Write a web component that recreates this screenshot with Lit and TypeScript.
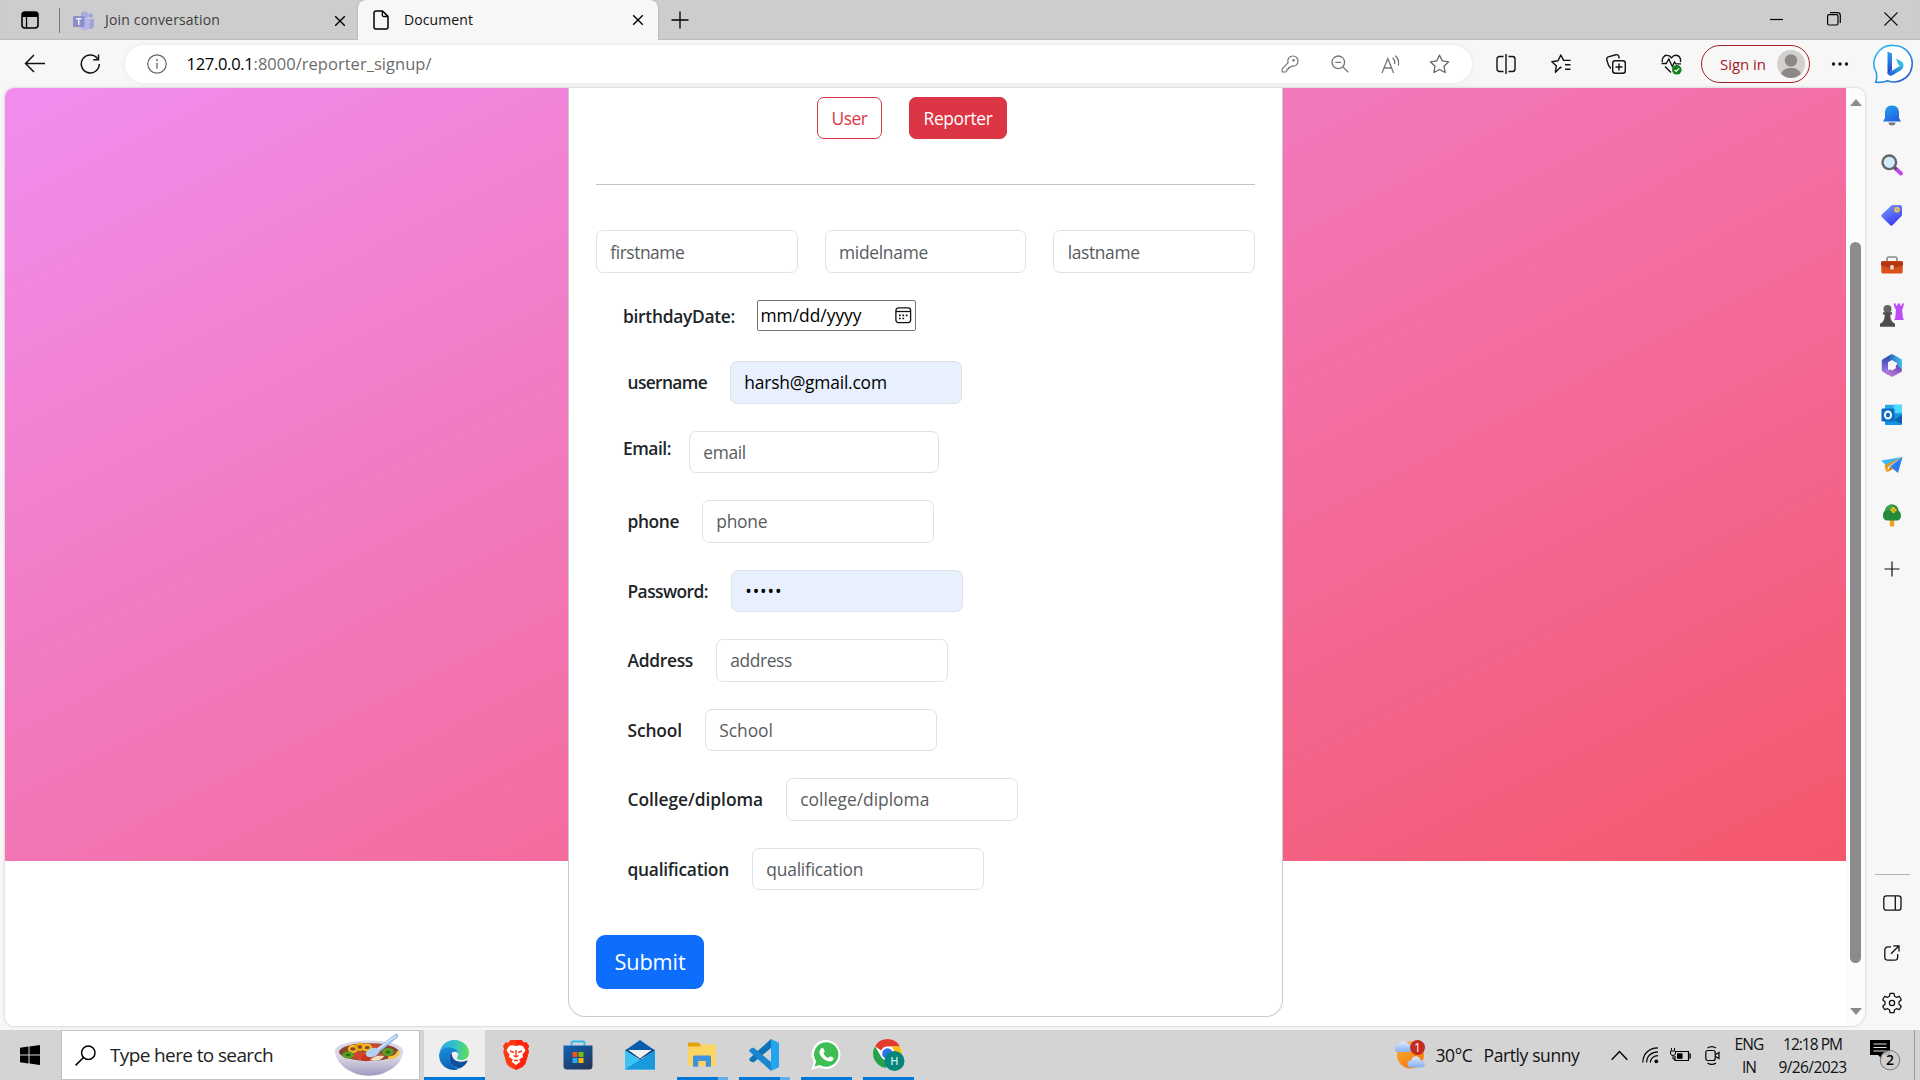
import { LitElement, html, css, svg, TemplateResult } from "lit";
import { customElement, property, query } from "lit/decorators.js";

/** A one-line label whose tracking is adjusted so that it spans a given width. */
@customElement("fit-label")
class FitLabel extends LitElement {
  @property() text = "";
  @property({ type: Number }) width = 0;
  @query(".t") private span!: HTMLSpanElement;

  static styles = css`
    :host { display: inline-block; white-space: pre; }
  `;

  updated() {
    if (!this.width) return;
    this.span.style.letterSpacing = "0px";
    const natural = this.span.getBoundingClientRect().width;
    this.span.style.letterSpacing = `${(this.width - natural) / this.text.length}px`;
  }

  render() {
    return html`<span class="t">${this.text}</span>`;
  }
}

const label = (text: string, width: number) => html`<fit-label .text=${text} .width=${width}></fit-label>`;

const icon = (w: number, h: number, body: TemplateResult | unknown) =>
  html`<svg class="ic" width=${w} height=${h} viewBox="0 0 ${w} ${h}" fill="none">${body}</svg>`;

/* ---------- browser chrome icons ---------- */
const tabActions = icon(18, 18, svg`<rect x="1" y="1" width="16" height="16" rx="3" stroke="#000" stroke-width="1.6"/><path d="M1 5V3.5A2.5 2.5 0 0 1 3.5 1h11A2.500 2.500 0 0 1 17 3.500V6H1z" fill="#000"/><path d="M5.500 5v12" stroke="#000" stroke-width="1.300"/>`);
const teams = icon(21, 20, svg`<circle cx="11.500" cy="4" r="3.600" fill="#a9aade"/><circle cx="17.500" cy="4.500" r="2.300" fill="#a2a4d8"/><path d="M14 8h7v6.500a3.500 3.500 0 0 1-5 3z" fill="#a2a4d8"/><path d="M6 8h11v6a5.500 5.500 0 0 1-11 0z" fill="#b4b5e6"/><rect x="0" y="5" width="11.500" height="11" rx="1.200" fill="#8c8fcb"/><path d="M3 7.800h5.500M5.750 8v6" stroke="#eeeefa" stroke-width="1.500"/>`);
const close = icon(12, 12, svg`<path d="M1.200 1.200l9.600 9.600M10.800 1.200l-9.600 9.600" stroke="#000" stroke-width="1.400"/>`);
const page = icon(16, 20, svg`<path d="M3 .9h6.500L15 6.400V17a2 2 0 0 1-2 2H3a2 2 0 0 1-2-2V3A2 2 0 0 1 3 .9z" stroke="#000" stroke-width="1.500"/><path d="M9.300 1v4a1.500 1.500 0 0 0 1.500 1.500H15" stroke="#000" stroke-width="1.300"/>`);
const plus = icon(18, 18, svg`<path d="M9 .5v17M.5 9h17" stroke="#000" stroke-width="1.300"/>`);
const minimise = icon(14, 14, svg`<path d="M0 7.500h13" stroke="#000" stroke-width="1.200"/>`);
const restore = icon(14, 14, svg`<rect x=".6" y="2.600" width="10.400" height="10.400" rx="1.500" stroke="#000" stroke-width="1.200"/><path d="M3 .7h7.500A2.800 2.800 0 0 1 13.300 3.500V11" stroke="#000" stroke-width="1.200"/>`);
const bigClose = icon(14, 14, svg`<path d="M.5.5l13 13M13.500.5l-13 13" stroke="#111" stroke-width="1.100"/>`);
const back = icon(22, 20, svg`<path d="M21 9.500H1.500M10 1L1.500 9.500 10 18" stroke="#111" stroke-width="1.500"/>`);
const reload = icon(21, 20, svg`<path d="M17.600 4.700A9 9 0 1 0 19.300 10" stroke="#111" stroke-width="1.500"/><path d="M18.500.5v5.200h-5.300" stroke="#111" stroke-width="1.500"/>`);
const info = icon(20, 20, svg`<circle cx="10" cy="10" r="9.200" stroke="#666" stroke-width="1.200"/><path d="M10 8.700v6" stroke="#666" stroke-width="1.300"/><circle cx="10" cy="6" r=".95" fill="#666"/>`);
const key = icon(18, 18, svg`<path d="M7 7.800C6 4 8.500 1 12 1a5 5 0 0 1 5 5c0 3.500-3 5.800-6.300 5L9.500 12.300H7.700V14H6v1.700L4.700 17H1.200v-3.200z" stroke="#777" stroke-width="1.200" stroke-linejoin="round"/><circle cx="12.600" cy="5.300" r="1.300" fill="#777"/>`);
const zoomOut = icon(18, 18, svg`<circle cx="7.300" cy="7.300" r="6.300" stroke="#777" stroke-width="1.300"/><path d="M12 12l5.200 5.200M4.300 7.300h6" stroke="#777" stroke-width="1.300"/>`);
const readAloud = icon(20, 19, svg`<path d="M1 18L6.800 3.500 12.600 18M3 13h7.600" stroke="#777" stroke-width="1.300"/><path d="M12 3.200c1.700 1.500 1.900 3.500 1.600 5.500M14.500 1c3.200 2.800 3.500 6 2.900 9.200" stroke="#777" stroke-width="1.300" stroke-linecap="round"/>`);
const star = icon(21, 20, svg`<path d="M10.500 1.200l2.800 5.700 6.300.9-4.600 4.400 1.100 6.300-5.600-3-5.600 3L6 12.200 1.400 7.800l6.300-.9z" stroke="#666" stroke-width="1.300" stroke-linejoin="round"/>`);
const split = icon(20, 20, svg`<path d="M7.500 2.500H3.500A2.500 2.500 0 0 0 1 5v10a2.500 2.500 0 0 0 2.500 2.500h4M12.500 2.500h4A2.500 2.500 0 0 1 19 5v10a2.500 2.500 0 0 1-2.500 2.500h-4M10 0v20" stroke="#111" stroke-width="1.400"/>`);
const favorites = icon(20, 20, svg`<path d="M10.500 13.800l-1-.6-5.100 5 .9-6.400L.8 7.700l6.200-.9L9.800 1l2.800 5.400h7M14 10.700h5.500M14 15.300h5.500" stroke="#111" stroke-width="1.400" stroke-linejoin="round"/>`);
const collections = icon(20, 20, svg`<rect x="6.700" y="6.700" width="12.600" height="12.600" rx="2.500" stroke="#111" stroke-width="1.400"/><path d="M13 9.500v7M9.500 13h7" stroke="#111" stroke-width="1.400"/><path d="M4.800 14.500L2.500 11.200.8 6A2.500 2.500 0 0 1 2.400 2.800l7.400-2a2.300 2.300 0 0 1 3 1.700l.5 2" stroke="#111" stroke-width="1.400"/>`);
const heart = icon(21, 21, svg`<path d="M1.300 8C.5 4.500 3 1.200 6 1.300c2 0 3.300 1 4.400 2.500C11.500 2.300 13 1.300 15 1.300c3 0 5.300 3 4.500 6.700M4 12.500l6 6" stroke="#111" stroke-width="1.400"/><path d="M.5 9.500h4.800L7.800 5l3.500 7.500L13.500 8l1.200 1.800H20" stroke="#111" stroke-width="1.300"/><circle cx="15.800" cy="15.800" r="4.800" fill="#12801a"/><path d="M13.500 15.800l1.700 1.700 3-3.200" stroke="#fff" stroke-width="1.200"/>`);
const avatar = icon(28, 28, svg`<circle cx="14" cy="14" r="14" fill="#d3d1cf"/><circle cx="14" cy="10.500" r="6.200" fill="#8d8885"/><path d="M4 23.800c1.500-4 5-5.800 10-5.800s8.500 1.800 10 5.800A14 14 0 0 1 4 23.800z" fill="#8d8885"/>`);
const dots = icon(18, 6, svg`<circle cx="2.500" cy="3" r="1.700" fill="#111"/><circle cx="9" cy="3" r="1.700" fill="#111"/><circle cx="15.500" cy="3" r="1.700" fill="#111"/>`);
const bing = icon(40, 40, svg`<defs><linearGradient id="bo" x1="0" y1="0" x2="1" y2="1"><stop offset="0" stop-color="#2cc3f5"/><stop offset=".5" stop-color="#2196ea"/><stop offset="1" stop-color="#2348cf"/></linearGradient><linearGradient id="bb" x1="0" y1="0" x2="0" y2="1"><stop offset="0" stop-color="#2fa4f5"/><stop offset="1" stop-color="#1f3fc4"/></linearGradient><linearGradient id="bc" x1="0" y1="1" x2="1" y2="0"><stop offset="0" stop-color="#1d55d8"/><stop offset="1" stop-color="#35d5e8"/></linearGradient></defs><path d="M20 1.500a18.200 18.200 0 1 1-6.500 35.200C9.500 38.500 6 38.600 1.800 38.200c1.400-3 1-6 .6-9.500A18.200 18.200 0 0 1 20 1.500z" fill="#fff" stroke="url(#bo)" stroke-width="1.600"/><path d="M13.500 7.500l4.500 1.900v17.200L13.500 30z" fill="url(#bb)"/><path d="M13.500 28.500c0 3 3 4 5.500 2.500l8.500-5.200c2.800-2.400 2.800-6.800-.5-8.600L22 14.500l2.300 6 2 1.200L16 28z" fill="url(#bc)"/>`);

/* ---------- sidebar icons ---------- */
const bell = icon(20, 21, svg`<defs><linearGradient id="be" x1="0" y1="0" x2=".6" y2="1"><stop offset="0" stop-color="#1fa5ea"/><stop offset="1" stop-color="#2463e6"/></linearGradient></defs><path d="M10 .5c5 0 7 3.500 7 7.500v5l2 3.500H1L3 13V8C3 4 5 .5 10 .5z" fill="url(#be)"/><path d="M6.500 17.500h7a3.500 3 0 0 1-7 0z" fill="#777"/>`);
const search = icon(22, 22, svg`<path d="M14 14l6 5.500" stroke="#c043f0" stroke-width="4" stroke-linecap="round"/><path d="M13 13l2.500 2.500" stroke="#555" stroke-width="3"/><circle cx="8.300" cy="8.300" r="6.800" fill="#d0ecfc" stroke="#666" stroke-width="2.400"/>`);
const tag = icon(22, 22, svg`<defs><linearGradient id="tg" x1="0" y1="0" x2="0.500" y2="1"><stop offset="0" stop-color="#7aa2ff"/><stop offset="1" stop-color="#3a3ff0"/></linearGradient></defs><path d="M12 1h7a2 2 0 0 1 2 2v7.500c0 .7-.2 1.200-.7 1.700L11.700 21a1.800 1.800 0 0 1-2.600 0L.9 13a1.800 1.800 0 0 1 0-2.600L10 1.700C10.600 1.200 11.200 1 12 1z" fill="url(#tg)"/><circle cx="16" cy="5.800" r="2" fill="#9a9bff" stroke="#f5cb2e" stroke-width="1.600"/>`);
const toolbox = icon(24, 18, svg`<path d="M7 6V3a2 2 0 0 1 2-2h6a2 2 0 0 1 2 2v3" stroke="#8b8b8b" stroke-width="1.700"/><rect x="1.300" y="5" width="21.400" height="12.500" rx="1.500" fill="#dc4f1b"/><path d="M1 5.500h22v4L14 12h-4L1 9.500z" fill="#b3360f"/><rect x="10.200" y="9" width="3.600" height="4.500" rx="1.500" fill="#ddd"/>`);
const chess = icon(24, 24, svg`<path d="M13.500.5h2.300v2h1.700v-2h2.600v2h1.700v-2H24L22.700 6H22l.8 8 1 3h-9.500l1-3 .7-8h-.8z" fill="#be4cf5"/><circle cx="7.500" cy="6" r="4" fill="#646464"/><path d="M3 9.300h9v2.200h-1.700c0 4 .7 6 2.700 8l2 1.200v3H0v-3l2-1.200c2-2 2.700-4 2.700-8H3z" fill="#4c4c4c"/>`);
const m365 = icon(22, 23, svg`<defs><linearGradient id="ma" x1="0" y1="0" x2="0" y2="1"><stop offset="0" stop-color="#2a3fae"/><stop offset="1" stop-color="#a98ae8"/></linearGradient><linearGradient id="mb" x1="0" y1="0" x2="1" y2="0"><stop offset="0" stop-color="#2465b5"/><stop offset="1" stop-color="#48bff2"/></linearGradient><linearGradient id="mc" x1="0" y1="1" x2="1" y2="0"><stop offset="0" stop-color="#d08ae4"/><stop offset="1" stop-color="#5d3eb0"/></linearGradient></defs><path d="M9.500.8L1.800 5.200A2 2 0 0 0 .8 7v9c0 .8.400 1.500 1 1.800L7 21V8.200l5-3z" fill="url(#ma)"/><path d="M8.500 1.300L10 .4a2 2 0 0 1 2 0l8 4.700a2 2 0 0 1 1 1.800v9.200L16 13V9L9.500 5.200 7.500 8z" fill="url(#mb)"/><path d="M3 18.500l8-4.500 5-3.500 5 5.300-.5 2L12 22.500a2 2 0 0 1-2 0z" fill="url(#mc)"/><path d="M11 8l3.800 2v4.300L11 16.500l-3.800-2.200V10z" fill="#f7f7f7"/>`);
const outlook = icon(22, 22, svg`<rect x="4" y=".8" width="17" height="16" rx="1" fill="#28a8ea"/><path d="M12.500.8H21v8h-8.500z" fill="#50d9ff"/><path d="M4 11l17-1v10a1 1 0 0 1-1 1H5a1 1 0 0 1-1-1z" fill="#1490df"/><path d="M13 16l8-5v9z" fill="#0f5fb0"/><rect x=".5" y="4.500" width="13" height="13" rx="1.200" fill="#0a6cc5"/><ellipse cx="7" cy="11" rx="3.100" ry="3.500" stroke="#fff" stroke-width="2"/>`);
const plane = icon(24, 19, svg`<path d="M1 4.500L22.500 1 8 11z" fill="#3fb6f5"/><path d="M22.500 1L8 10.500 7.500 16l-1.500-.5-1.500-6.300z" fill="#e89a16"/><path d="M22.500 1L10 10.500l8 6.500z" fill="#2b7cf0"/><path d="M7.300 16l2.700-5.500 3 2.500z" fill="#d98300"/>`);
const tree = icon(20, 23, svg`<rect x="7.800" y="15" width="4.500" height="7.500" rx="1" fill="#f0a020"/><path d="M10 .5c4 0 6 2.500 6.500 6 2.500 2 3 5 2 7.500-1 2-2 2.500-4 2.500h-9c-2.500 0-4-1.500-4.500-4C.7 10 1.500 8 3 6.500 3.700 3 6 .5 10 .5z" fill="#228a3a"/><path d="M10 .5C6 .5 3.700 3 3.500 6.500L13 5z" fill="#3aa64c"/><path d="M11.500 3v6M8.500 6h6" stroke="#f6c51d" stroke-width="2.400"/><circle cx="11.500" cy="6" r="1" fill="#e07b00"/>`);
const sidePlus = icon(16, 16, svg`<path d="M8 .5v15M.5 8h15" stroke="#111" stroke-width="1.200"/>`);
const panel = icon(19, 16, svg`<rect x=".8" y=".8" width="17.200" height="14.400" rx="2.500" stroke="#111" stroke-width="1.300"/><path d="M12.300 1v14" stroke="#111" stroke-width="1.300"/>`);
const openExt = icon(16, 16, svg`<path d="M7 1.800H4A3.200 3.200 0 0 0 .8 5v7A3.200 3.200 0 0 0 4 15.200h6.500A3.200 3.200 0 0 0 13.700 12V9M9.300.8H15v5.700M15 .8L7 8.700" stroke="#111" stroke-width="1.300"/>`);
const gear = icon(22, 22, svg`<path d="M9 1.300h4l.6 3 1.800 1 2.900-1 2 3.500-2.300 2v2.400l2.300 2-2 3.500-2.900-1-1.800 1-.6 3H9l-.6-3-1.800-1-2.900 1-2-3.500 2.300-2V9.800l-2.300-2 2-3.500 2.900 1 1.800-1z" stroke="#111" stroke-width="1.300" stroke-linejoin="round"/><circle cx="11" cy="11" r="2.600" stroke="#111" stroke-width="1.300"/>`);

/* ---------- taskbar icons ---------- */
const windows = icon(20, 20, svg`<path d="M0 2.800l8.500-1.200v7.900H0zM9.500 1.400L20 0v9.500H9.500zM0 10.500h8.500v7.900L0 17.200zM9.500 10.500H20V20L9.500 18.600z" fill="#000"/>`);
const lens = icon(21, 21, svg`<circle cx="13.300" cy="7.700" r="6.700" stroke="#000" stroke-width="1.500"/><path d="M8.500 12.500L.6 20.400" stroke="#000" stroke-width="1.600"/>`);
const bowl = icon(70, 44, svg`<defs><linearGradient id="bw" x1="0" y1="0" x2="0" y2="1"><stop offset="0" stop-color="#f0eef6"/><stop offset="1" stop-color="#a09bbd"/></linearGradient></defs><path d="M.8 17C1 29 11 36 20 40c8 3.500 22 3.500 30 0 9-4 19-11 19-22z" fill="url(#bw)"/><ellipse cx="35" cy="18" rx="34.300" ry="10.500" fill="#d9d6e6"/><ellipse cx="35" cy="19" rx="30" ry="8.800" fill="#8a4432"/><ellipse cx="34" cy="23" rx="17" ry="4.500" fill="#a8563c"/><g stroke-width="2.400"><ellipse cx="19" cy="16" rx="4" ry="3" stroke="#f3b81c"/><ellipse cx="26" cy="14" rx="4" ry="3" stroke="#f0a80c"/><ellipse cx="33" cy="14.500" rx="4" ry="2.800" stroke="#f3b81c"/></g><ellipse cx="14" cy="22" rx="6" ry="3.500" fill="#5c9e28"/><ellipse cx="14" cy="22" rx="2.500" ry="1.300" fill="#2e6b12"/><ellipse cx="54" cy="19" rx="6" ry="4" fill="#5c9e28"/><ellipse cx="54" cy="19" rx="2.500" ry="1.600" fill="#2e6b12"/><path d="M64 18c1 5-6 7-10 7" stroke="#f3c23c" stroke-width="3"/><ellipse cx="25" cy="23" rx="5" ry="3.800" fill="#d8402a"/><ellipse cx="32" cy="25" rx="4.500" ry="3.300" fill="#c8331f"/><ellipse cx="42" cy="13" rx="4" ry="2.500" fill="#cf4a2c"/><path d="M36 27c3-4 9-5 14-4-2 4-8 6-14 4z" fill="#f4dcc0"/><path d="M62 3L43 18" stroke="#9bbde6" stroke-width="4.500" stroke-linecap="round"/><path d="M61.500 3L43 17" stroke="#cfe2f8" stroke-width="2" stroke-linecap="round"/><ellipse cx="38.500" cy="19.500" rx="7" ry="4.300" fill="#b4d0ee" transform="rotate(-20 38.500 19.500)"/>`);
const edge = icon(30, 30, svg`<defs><linearGradient id="e1" x1="0" y1=".3" x2="1" y2=".4"><stop offset="0" stop-color="#2aa5e6"/><stop offset=".5" stop-color="#2fc3c8"/><stop offset="1" stop-color="#5fdd5a"/></linearGradient><linearGradient id="e2" x1="0" y1="0" x2=".3" y2="1"><stop offset="0" stop-color="#1790dc"/><stop offset="1" stop-color="#0c62b8"/></linearGradient></defs><path d="M.6 12.500C2 5 8 0 15 0c8.500 0 15 5.800 15 12.500 0 5-3.800 7.500-7.500 7.500-3 0-4.500-1-4.500-2 0-.8 1.300-1.500 1.300-4 0-3-3.300-5.500-7-5.500C7 8.500 2.500 10 .6 12.500z" fill="url(#e1)"/><path d="M.1 15C.3 11 4.500 7.500 9.500 7.500c5.500 0 9.500 2.700 9.800 6.300C18.500 12 16.800 11.500 15 11.800c-3 .5-5 3.700-4.500 7.700.7 4.500 4.500 8.500 9.500 9-1.500 1-3.500 1.500-5 1.500C6.500 30 0 23.500.1 15z" fill="url(#e2)"/><path d="M13 12.700c-2 1.300-3 4-2.500 6.800.8 5.500 5.500 9 10.500 8.700 3-1.200 6-4 7.500-7 .3-.7-.2-1-.8-.7-2 1-4 1.300-6 1.200-6-.2-9.500-4-8.700-9z" fill="#0d4f9f"/>`);
const brave = icon(26, 30, svg`<path d="M7.500 0h11L21 2.800l2.500-.5L26 6l-1 3 .8 3-3.500 12-3 3L13 30l-6.300-3-3-3L.2 12 1 9 0 6l2.500-3.700 2.500.5z" fill="#fb3b12"/><path d="M13 0h5.500L21 2.800l2.500-.5L26 6l-1 3 .8 3-3.500 12-3 3L13 30z" fill="#ff2410"/><path d="M13 6l3.500-.8L20 6l2.500 4.500-3 4 .5 2.500-4 2.500 1.500 2L13 25l-4.500-3.500 1.500-2L6 17l.5-2.500-3-4L6 6l3.500-.8z" fill="#fff"/><path d="M7 11l4 1.500M19 11l-4 1.500M13 10v6M10.500 15.500L13 17l2.500-1.500M11 20.500h4" stroke="#fb3b12" stroke-width="1.400"/>`);
const store = icon(30, 30, svg`<defs><linearGradient id="st" x1="0" y1="0" x2=".6" y2="1"><stop offset="0" stop-color="#0f63b4"/><stop offset="1" stop-color="#22395f"/></linearGradient></defs><path d="M8.500 7V3A1.500 1.500 0 0 1 10 1.500h10A1.500 1.500 0 0 1 21.500 3v4" stroke="#35baf2" stroke-width="2"/><path d="M.5 5.500h29V26a3.500 3.500 0 0 1-3.500 3.500H4A3.500 3.500 0 0 1 .5 26z" fill="url(#st)"/><path d="M9.500 12h5v5h-5z" fill="#f25022"/><path d="M15.500 12h5v5h-5z" fill="#7fba00"/><path d="M9.500 18h5v5h-5z" fill="#2aa9f3"/><path d="M15.500 18h5v5h-5z" fill="#ffb900"/>`);
const mail = icon(30, 30, svg`<path d="M0 10.500L15 0l15 10.500z" fill="#0a5cab"/><path d="M0 10h30v19.500H0z" fill="#3cc2f3"/><path d="M0 29.500L30 10v19.500z" fill="#1c98dc"/><path d="M2.500 10h25L17 19h-4z" fill="#f4f4f4"/><path d="M0 10l15 9.500L30 10l-2.500-.5-12.500 8-12.500-8z" fill="#0a3a78"/><path d="M3.500 10h23L15 18.500z" fill="#f0f0f0"/>`);
const explorer = icon(28, 26, svg`<path d="M0 2A1.500 1.500 0 0 1 1.500.5h9L13 3v4H0z" fill="#e3a10c"/><path d="M0 4.500h11.500L13.500 2.500H27a1 1 0 0 1 1 1V24H1.500A1.500 1.500 0 0 1 0 22.500z" fill="#fcd462"/><path d="M5 24.800V15a1.500 1.500 0 0 1 1.500-1.500h15A1.500 1.500 0 0 1 23 15v9.800h-5.200V19H10.200v5.800z" fill="#3f92dc"/>`);
const vscode = icon(30, 32, svg`<path d="M22 0l8 3.800v24.400L22 32z" fill="#24a3ee"/><path d="M22 0v9L4.500 23.500 1 22c-1-.8-1-2 0-3z" fill="#0f73b8"/><path d="M22 32v-9L4.500 8.500 1 10c-1 .8-1 2 0 3z" fill="#1a86d0"/>`);
const whatsapp = icon(30, 30, svg`<path d="M15.200 0a14.500 14.500 0 1 1-6.700 27.500L.2 30l2.500-8A14.500 14.500 0 0 1 15.200 0z" fill="#fff"/><path d="M15.200 2.300a12.200 12.200 0 1 1-6.300 22.600L3.500 26.500 5.200 21.400A12.200 12.200 0 0 1 15.200 2.300z" fill="#3fbe54"/><path d="M10.800 8c.7-.4 1.300-.2 1.600.4l1.300 2.800c0 .7-1 1.500-1.300 2 1 2.300 2.700 3.800 5 4.700.6-.3 1.300-1.700 2-1.600l3 1.500c.5.400 0 2.200-1 3-1.500 1-3.500.9-5.800 0-3.300-1.400-5.600-4-7-6.800C8 11.800 9 9 10.800 8z" fill="#fff"/>`);
const chrome = icon(30, 32, svg`<circle cx="14.500" cy="14.500" r="14.500" fill="#fff"/><path d="M2 7.200A14.500 14.500 0 0 1 27.200 7.500H14.500a7 7 0 0 0-6.300 4z" fill="#e23b2e"/><path d="M27.200 7.500A14.500 14.500 0 0 1 14.500 29l6-11c1.700-3 1-7.500-2.500-10.500z" fill="#fbc116"/><path d="M2 7.200l6.300 10.800c1.500 2.500 4.500 3.700 8 3.200L13 29A14.500 14.500 0 0 1 2 7.200z" fill="#25a24b"/><circle cx="14.500" cy="14.500" r="6.700" fill="#fff"/><circle cx="14.500" cy="14.500" r="5.300" fill="#2f73e8"/><circle cx="21.500" cy="22" r="10" fill="#06857a"/><text x="21.500" y="26" text-anchor="middle" font-size="11" font-weight="600" font-family="Open Sans, sans-serif" fill="#c9ebe6">H</text>`);
const weather = icon(32, 30, svg`<defs><linearGradient id="su" x1="0" y1="0" x2=".6" y2="1"><stop offset="0" stop-color="#f9b52a"/><stop offset="1" stop-color="#f57a14"/></linearGradient><linearGradient id="cl" x1="0" y1="0" x2="0" y2="1"><stop offset="0" stop-color="#dceafd"/><stop offset="1" stop-color="#86b0ee"/></linearGradient></defs><circle cx="15.500" cy="15" r="13.500" fill="url(#su)"/><path d="M3.500 12a3.500 3.500 0 0 1-.5-7A6 6 0 0 1 13 3.500c4 0 6 3 5 6-.5 1.500-2 2.500-3.500 2.500z" fill="url(#cl)"/><path d="M16 27.500a3.500 3.500 0 0 1 0-7c.7-3 3-4.200 5-4.200s4 1.200 4.500 4c3 0 4.500 2 4.500 3.700S28.500 27.500 26.500 27.500z" fill="url(#cl)"/><circle cx="22.500" cy="7.500" r="7.500" fill="#c32b20"/><text x="22.500" y="12" text-anchor="middle" font-size="12" font-family="Open Sans, sans-serif" fill="#fff">1</text>`);
const chevron = icon(17, 11, svg`<path d="M.7 9.800L8.500 1.500l7.800 8.300" stroke="#000" stroke-width="1.400"/>`);
const wifi = icon(17, 17, svg`<g stroke="#000" stroke-width="1.200"><path d="M.8 15.500C.8 7 7 .8 16 .8"/><path d="M4.600 15.500C4.600 9 9.500 4.800 16 4.800"/><path d="M8.400 15.500c0-4 3.100-6.800 7.600-6.800"/></g><circle cx="14.300" cy="14.300" r="1.900" fill="#000"/>`);
const battery = icon(21, 15, svg`<path d="M6 3.500h12.500v9H5V8M19.200 6h1v4h-1" stroke="#000" stroke-width="1.200"/><path d="M7 5.300h5.500v5.500H7z" fill="#000"/><path d="M1.500 0v2.500M4.500 0v2.500M.5 3h5v2a2.500 2.500 0 0 1-5 0zM3 7.500V11h2" stroke="#000" stroke-width="1"/>`);
const camera = icon(15, 19, svg`<rect x=".8" y="4.500" width="9.400" height="10" rx="2" stroke="#000" stroke-width="1.200"/><path d="M10.500 8.500l3.500-2v6l-3.500-2M2.500 2C5 .3 8.500.3 11 2M2.500 17c2.500 1.700 6 1.700 8.500 0" stroke="#000" stroke-width="1.200"/>`);
const actionCenter = icon(31, 32, svg`<path d="M0 1h20v15h-8v4l-4-4H0z" fill="#000"/><path d="M3.500 5h13M3.500 8.500h13M3.500 12h13" stroke="#ddd" stroke-width="1.200"/><circle cx="20" cy="21.200" r="9.700" fill="#cfcfcfdd" stroke="#777" stroke-width="1"/><text x="20" y="26.200" text-anchor="middle" font-size="14" font-weight="600" font-family="Open Sans, sans-serif" fill="#000">2</text>`);
const calendar = icon(17, 17, svg`<rect x=".9" y=".9" width="14.700" height="14.700" rx="2.500" stroke="#111" stroke-width="1.300"/><path d="M1 4.500h14.500" stroke="#111" stroke-width="1.300"/><path d="M4 8.300h1.700M7.400 8.300h1.700M10.800 8.300h1.700M4 11.500h1.700M7.400 11.500h1.700" stroke="#111" stroke-width="1.700"/>`);

interface Row { label: string; lw: number; gap: number; text: string; tw: number; w: number; kind?: string; filled?: boolean }
const ROWS: Row[] = [
  { label: "username", lw: 79.5, gap: 23, text: "harsh@gmail.com", tw: 142.5, w: 232, filled: true },
  { label: "Email:", lw: 48, gap: 18, text: "email", tw: 42.5, w: 250, kind: "email" },
  { label: "phone", lw: 51.5, gap: 23, text: "phone", tw: 51, w: 232 },
  { label: "Password:", lw: 80.5, gap: 23, text: "•••••", tw: 37, w: 232, filled: true, kind: "password" },
  { label: "Address", lw: 65.5, gap: 23, text: "address", tw: 61.5, w: 232 },
  { label: "School", lw: 54.5, gap: 23, text: "School", tw: 53.5, w: 232 },
  { label: "College/diploma", lw: 135.5, gap: 23, text: "college/diploma", tw: 129, w: 232 },
  { label: "qualification", lw: 101.5, gap: 23, text: "qualification", tw: 97, w: 232 },
];

@customElement("app-root")
class AppRoot extends LitElement {
  static styles = css`
    :host { display: flex; flex-direction: column; width: 1920px; height: 1080px; overflow: hidden;
      font-family: "Open Sans", "Noto Sans", sans-serif; background: #f7f7f7; color: #212529; line-height: 1.2; }
    * { box-sizing: border-box; }
    .ic { display: block; flex: none; overflow: visible; }

    .tabs { display: flex; flex: none; height: 40px; background: #cdcdcd; box-shadow: inset 0 -1px 1px #bcbcbc; font-size: 14px; color: #111; }
    .tabs .lead { width: 59px; padding: 11px 0 0 21px; }
    .tab { display: flex; align-items: center; height: 40px; }
    .idle { width: 299px; height: 25px; margin-top: 8px; border-left: 1.5px solid #777; padding-left: 13px; color: #3d3d3d; }
    .idle .name { margin-left: 11px; }
    .idle .x { margin-left: auto; padding-right: 12.500px; }
    .active { width: 300px; background: #f7f7f7; border-radius: 8px 8px 0 0; padding-left: 15px; box-shadow: 0 0 2px #999; clip-path: inset(0 -3px 0 -3px); }
    .active .name { margin-left: 15px; }
    .active .x { margin-left: auto; padding-right: 14px; }
    .new { padding: 11px 0 0 12.500px; }
    .win { display: flex; margin-left: auto; gap: 43px; padding: 12px 22px 0 0; }

    .bar { display: flex; flex: none; align-items: center; height: 48px; padding: 0 6px 0 24px; }
    .bar .re { margin-left: 34px; }
    .omni { display: flex; align-items: center; width: 1347px; height: 38px; margin-left: 24px; border-radius: 19px; background: #fff; padding: 0 22px; box-shadow: 0 0 4px #e2e2e2; }
    .url { margin-left: 19.500px; font-size: 16.500px; color: #6c6c6c; display: flex; }
    .url .host { color: #000; }
    .acts { display: flex; align-items: center; gap: 32px; margin-left: auto; }
    .acts .fav { margin-left: -4px; }
    .tools { display: flex; align-items: center; gap: 35px; margin-left: 24px; }
    .signin { display: flex; align-items: center; justify-content: space-between; width: 109px; height: 38px; margin-left: 19px; border: 1.500px solid #a52025; border-radius: 19px; padding: 0 4px 0 18px; color: #a52025; font-size: 15px; }
    .more { margin-left: 21px; }
    .bing { margin-left: auto; }

    .main { display: flex; flex: 1; min-height: 0; }
    .view { display: flex; width: 1860px; height: 938px; margin-left: 5px; border-radius: 9px 9px 14px 9px; overflow: hidden; background: #fff; box-shadow: 0 0 3px #bbb; }
    .doc { display: flex; flex: 1; justify-content: center; align-items: flex-start; overflow: hidden;
      background: linear-gradient(to bottom right, #f093fb, #f5576c) 0 -165px / 100% 938px no-repeat #fff; }
    .card { width: 715px; height: 928.700px; border: 1px solid #cbcbcb; border-top: 0; border-radius: 0 0 17px 17px; background: #fff; padding: 9px 27px 0; font-size: 17.400px; }
    .roles { display: flex; gap: 27px; padding-left: 221px; }
    .role { display: flex; align-items: center; justify-content: center; height: 42px; padding-top: 1px; border: 1.200px solid #dc3545; border-radius: 7px; color: #dc3545; width: 65px; }
    .role.on { background: #dc3545; color: #fff; width: 98px; }
    .rule { height: 1px; background: #c2c3c4; margin: 45px 0 45px; }
    .names { display: grid; grid-template-columns: repeat(3, 1fr); gap: 27px; }
    .field { display: flex; align-items: center; height: 42.500px; border: 1px solid #dee2e6; border-radius: 7px; padding: 1px 0 0 13.300px; color: #595c5f; background: #fff; }
    .names .field { padding-top: 2px; }
    .field.filled { background: #e8f0fe; color: #000; }
    .birth { display: flex; align-items: center; margin: 27px 0 30.500px 27px; height: 31px; }
    .lab { font-weight: 600; padding-top: 1px; }
    .birth .lab { padding-top: 2px; }
    .date { display: flex; align-items: center; justify-content: space-between; width: 159px; height: 31px; border: 1px solid #767676; border-radius: 2px; margin-left: 22px; padding: 1px 3.500px 0 2.500px; color: #000; }
    .row { display: flex; align-items: center; height: 42.500px; margin: 0 0 27px 31.500px; }
    .row.email { margin-left: 27px; }
    .row.email .lab { padding: 0 0 7.500px; }
    .submit { display: flex; align-items: center; justify-content: center; width: 108px; height: 54px; margin-top: 45px; border-radius: 9px; background: #0d6efd; color: #fff; font-size: 21.700px; }
    .scroll { display: flex; flex-direction: column; align-items: center; width: 19px; background: #fcfcfc; padding: 11px 0 10px; }
    .arrow { border: 6px solid transparent; border-top: 0; border-bottom: 7px solid #8b8b8b; }
    .thumb { width: 11px; height: 721px; border-radius: 6px; background: #8b8b8b; margin-top: 136px; }
    .arrow.down { border-top: 7px solid #8b8b8b; border-bottom: 0; margin-top: auto; margin-bottom: 1px; }
    .side { display: flex; flex-direction: column; align-items: center; width: 54px; padding-top: 2px; }
    .slot { display: flex; align-items: center; justify-content: center; height: 50px; flex: none; }
    .slot.add { height: 57px; }
    .sep { width: 35px; height: 1px; background: #b5b5b5; margin: 277px 0 3px; flex: none; }

    .task { display: flex; flex: none; height: 50px; background: #d4d4d4; color: #111; }
    .start { width: 60.500px; padding: 15px 0 0 20px; }
    .find { display: flex; align-items: center; width: 359.500px; height: 50px; border: 1px solid #c2c2c2; background: #fff; padding: 0 15px 0 13px; font-size: 19px; color: #222; }
    .find .q { margin-left: 14.500px; }
    .find .pic { margin-left: auto; }
    .apps { display: flex; margin-left: 4px; }
    .app { display: flex; flex-direction: column; align-items: center; width: 62px; height: 50px; }
    .app .pad { display: flex; align-items: center; justify-content: center; flex: 1; padding-top: 3px; }
    .app.cur { background: #eee; width: 61px; }
    .app.cur .pad { padding-right: 2px; }
    .line { display: flex; height: 3px; width: 51px; background: #0078d7; }
    .line.multi { background: linear-gradient(to right, #0078d7 41px, #66aee8 41px); }
    .line.full { width: 61px; }
    .line.none { background: none; }
    .tray { display: flex; align-items: center; margin-left: auto; padding-right: 5px; font-size: 17.500px; }
    .two { display: flex; flex-direction: column; align-items: center; gap: 3px; font-size: 15.500px; line-height: 20px; }
    .g11 { margin-left: 11px; } .g8 { margin-left: 8.500px; } .g30 { margin-left: 31px; }
    .g14 { margin-left: 14px; } .g12 { margin-left: 11px; } .g16 { margin-left: 15px; } .g23 { margin-left: 23px; }
    .edge { width: 1px; height: 50px; background: #999; margin-left: 13.500px; }
  `;

  private app(pic: TemplateResult, line: string, cur = false) {
    return html`<div class="app ${cur ? "cur" : ""}"><div class="pad">${pic}</div><div class="line ${line}"></div></div>`;
  }

  private row(r: Row) {
    return html`<div class="row ${r.kind ?? ""}">
      <span class="lab">${label(r.label, r.lw)}</span>
      <div class="field ${r.filled ? "filled" : ""} ${r.kind ?? ""}" style="width:${r.w}px;margin-left:${r.gap}px">${label(r.text, r.tw)}</div>
    </div>`;
  }

  render() {
    return html`
      <div class="tabs">
        <div class="lead">${tabActions}</div>
        <div class="tab idle">${teams}<span class="name">${label("Join conversation", 115)}</span><span class="x">${close}</span></div>
        <div class="tab active">${page}<span class="name">${label("Document", 69)}</span><span class="x">${close}</span></div>
        <div class="new">${plus}</div>
        <div class="win">${minimise}${restore}${bigClose}</div>
      </div>
      <div class="bar">
        ${back}<span class="re">${reload}</span>
        <div class="omni">
          ${info}
          <span class="url"><span class="host">${label("127.0.0.1", 67)}</span>${label(":8000/reporter_signup/", 178)}</span>
          <div class="acts">${key}${zoomOut}${readAloud}<span class="fav">${star}</span></div>
        </div>
        <div class="tools">${split}${favorites}${collections}${heart}</div>
        <div class="signin">${label("Sign in", 46)}${avatar}</div>
        <span class="more">${dots}</span>
        <span class="bing">${bing}</span>
      </div>
      <div class="main">
        <div class="view">
          <div class="doc">
            <div class="card">
              <div class="roles"><div class="role">${label("User", 36)}</div><div class="role on">${label("Reporter", 69)}</div></div>
              <div class="rule"></div>
              <div class="names">
                <div class="field">${label("firstname", 74)}</div>
                <div class="field">${label("midelname", 89)}</div>
                <div class="field">${label("lastname", 72)}</div>
              </div>
              <div class="birth"><span class="lab">${label("birthdayDate:", 112)}</span><div class="date">${label("mm/dd/yyyy", 101)}${calendar}</div></div>
              ${ROWS.map((r) => this.row(r))}
              <div class="submit">${label("Submit", 71)}</div>
            </div>
          </div>
          <div class="scroll"><div class="arrow"></div><div class="thumb"></div><div class="arrow down"></div></div>
        </div>
        <div class="side">
          ${[bell, search, tag, toolbox, chess, m365, outlook, plane, tree].map((i) => html`<div class="slot">${i}</div>`)}
          <div class="slot add">${sidePlus}</div>
          <div class="sep"></div>
          ${[panel, openExt, gear].map((i) => html`<div class="slot">${i}</div>`)}
        </div>
      </div>
      <div class="task">
        <div class="start">${windows}</div>
        <div class="find">${lens}<span class="q">${label("Type here to search", 163)}</span><span class="pic">${bowl}</span></div>
        <div class="apps">
          ${this.app(edge, "full", true)}${this.app(brave, "none")}${this.app(store, "none")}${this.app(mail, "none")}
          ${this.app(explorer, "multi")}${this.app(vscode, "multi")}${this.app(whatsapp, "")}${this.app(chrome, "")}
        </div>
        <div class="tray">
          ${weather}
          <span class="g8">${label("30°C", 37)}</span><span class="g11">${label("Partly sunny", 96)}</span>
          <span class="g30">${chevron}</span><span class="g14">${wifi}</span><span class="g12">${battery}</span><span class="g14">${camera}</span>
          <div class="two g16">${label("ENG", 29)}${label("IN", 14)}</div>
          <div class="two g16">${label("12:18 PM", 59)}${label("9/26/2023", 68)}</div>
          <span class="g23">${actionCenter}</span>
          <div class="edge"></div>
        </div>
      </div>
    `;
  }
}
